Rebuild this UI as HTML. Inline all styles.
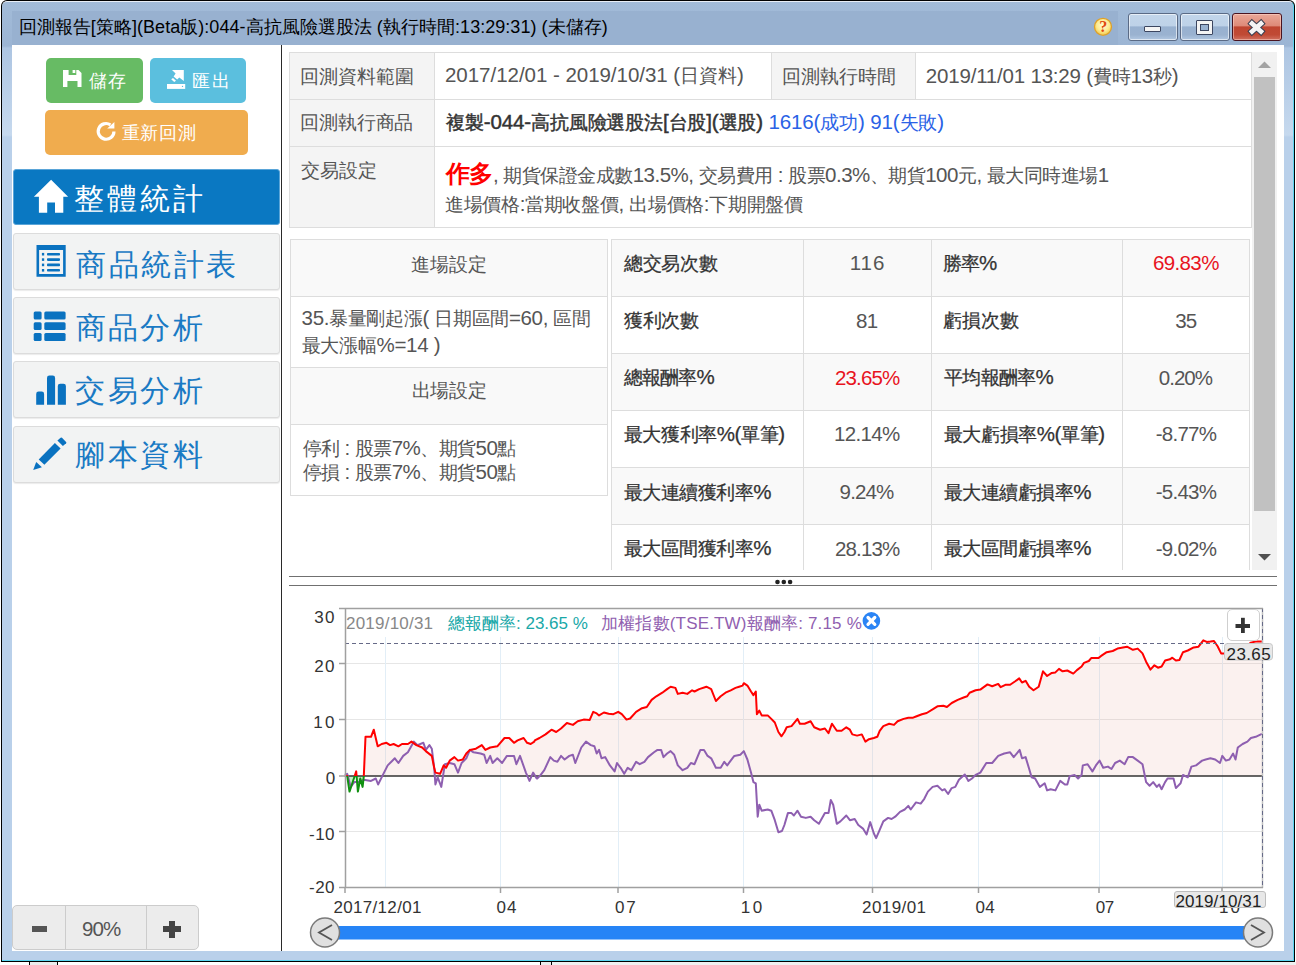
<!DOCTYPE html>
<html><head><meta charset="utf-8">
<style>
*{box-sizing:border-box;margin:0;padding:0}
html,body{width:1296px;height:965px;overflow:hidden;background:#fff;font-family:"Liberation Sans",sans-serif}
.a{position:absolute}
.t{position:absolute;white-space:nowrap;line-height:1}
</style></head><body>
<!-- window -->
<div class="a" style="left:0;top:962px;width:1296px;height:3px;background:#f0f0f0"></div>
<div class="a" style="left:0;top:962px;width:540px;height:3px;background:#fff"></div>
<div class="a" style="left:29px;top:962px;width:29px;height:3px;background:#ececec;border-left:1px solid #000;border-right:1px solid #000"></div>
<div class="a" style="left:540px;top:962px;width:12px;height:3px;background:#ececec;border-left:1px solid #000;border-right:1px solid #000"></div>
<div class="a" style="left:1px;top:0;width:1294px;height:962px;background:#000;border-radius:6px 6px 0 0"></div>
<div class="a" style="left:2px;top:1px;width:1292px;height:960px;background:linear-gradient(#a2bbd8 0px,#9cb5d4 44px,#adc5e2 46px,#c6d9ee 133px,#b9d0ea 135px,#b9d0ea 100%);border-radius:5px 5px 0 0;border-top:1px solid #e8eef6;border-right:1px solid #5ad6f0;border-bottom:1px solid #5ad6f0"></div>
<div class="a" style="left:12px;top:11px;width:1106px;height:34px;background:#98b1d0"></div>
<div class="a" style="left:12px;top:45px;width:1272px;height:906px;background:#fff"></div>


<!-- title buttons -->
<svg class="a" style="left:1093px;top:17px" width="20" height="20" viewBox="0 0 20 20"><defs><radialGradient id="hg" cx="50%" cy="40%" r="60%"><stop offset="0" stop-color="#fffbd8"/><stop offset="0.6" stop-color="#fdeb90"/><stop offset="1" stop-color="#f2c84a"/></radialGradient></defs><circle cx="10" cy="9.8" r="8.5" fill="url(#hg)" stroke="#dea02a" stroke-width="1.3"/><text x="10.3" y="15.3" text-anchor="middle" font-family="Liberation Serif" font-size="16" font-weight="bold" fill="#e0480e">?</text></svg>

<div class="a" style="left:1128px;top:13px;width:50px;height:28px;border:1px solid #5a6a85;border-radius:3px;background:linear-gradient(#c2d5ea 0,#bed2e8 45%,#98b1d0 50%,#9ab2d0 80%,#b2c8e2 100%);box-shadow:inset 0 0 0 1px rgba(255,255,255,.6)"></div>
<div class="a" style="left:1144px;top:26px;width:17px;height:6px;background:#f4f4f4;border:1px solid #3c4660;border-radius:1px"></div>
<div class="a" style="left:1180px;top:13px;width:50px;height:28px;border:1px solid #5a6a85;border-radius:3px;background:linear-gradient(#c2d5ea 0,#bed2e8 45%,#98b1d0 50%,#9ab2d0 80%,#b2c8e2 100%);box-shadow:inset 0 0 0 1px rgba(255,255,255,.6)"></div>
<div class="a" style="left:1196px;top:20px;width:17px;height:15px;background:#f4f4f4;border:1px solid #3c4660;border-radius:1px"></div>
<div class="a" style="left:1200px;top:24px;width:9px;height:7px;background:#98b1d0;border:1px solid #3c4660"></div>
<div class="a" style="left:1232px;top:13px;width:50px;height:28px;border:1px solid #4a1420;border-radius:3px;background:linear-gradient(#eaa898 0,#de8a78 45%,#bf4530 50%,#c04a35 80%,#d07060 100%);box-shadow:inset 0 0 0 1px rgba(255,220,210,.5)"></div>
<svg class="a" style="left:1246px;top:18px" width="22" height="19" viewBox="0 0 22 19"><path d="M6,5.5 L15,13.5 M15,5.5 L6,13.5" stroke="#3a3f50" stroke-width="6.6" stroke-linecap="square"/><path d="M6,5.5 L15,13.5 M15,5.5 L6,13.5" stroke="#f4f4f4" stroke-width="4.6" stroke-linecap="square"/></svg>

<!-- sidebar -->
<div class="a" style="left:281px;top:45px;width:1px;height:906px;background:#2a2a2a"></div>

<div class="a" style="left:46px;top:58px;width:97px;height:45px;background:#67bb64;border-radius:5px"></div>
<svg class="a" style="left:63.4px;top:69.9px" width="19" height="18" viewBox="0 0 19 18"><path d="M0,0 H15.5 L18.5,3 V17.1 H0 Z M5.6,0 V5 H13.3 V0 Z M4.4,11 V17.1 H14.5 V11 Z" fill="#fff" fill-rule="evenodd"/><rect x="9.6" y="0" width="2.7" height="3" fill="#fff"/></svg>

<div class="a" style="left:150px;top:58px;width:96px;height:45px;background:#5bbfde;border-radius:5px"></div>
<svg class="a" style="left:160px;top:64px" width="32" height="30" viewBox="0 0 32 30"><path d="M12,6.1 H23.8 V16.9 L19.3,13.4 L17.2,15.6 L13.6,12.4 L15.6,9.6 Z" fill="#fff"/><path d="M11.2,15.2 L13,14 L16,16.8 L14.2,18 Z" fill="#fff"/><rect x="7" y="20" width="18.2" height="4.9" fill="#fff"/><circle cx="22.5" cy="22.4" r="0.7" fill="#5bbfde"/></svg>

<div class="a" style="left:45px;top:110px;width:203px;height:45px;background:#f0ac4e;border-radius:5px"></div>
<svg class="a" style="left:92px;top:116px" width="32" height="30" viewBox="0 0 32 30"><path d="M21.95,15.4 A7.85,7.85 0 1 1 18.4,8.8" fill="none" stroke="#fff" stroke-width="3.2"/><path d="M15.2,12.6 L22.4,5.9 L22.4,12.4 Z" fill="#fff"/></svg>

<!-- nav -->
<div class="a" style="left:13px;top:169px;width:267px;height:56px;background:#0a78c2;border:1px solid #5aa5d8;border-radius:3px"></div>

<div class="a navb" style="top:233px"></div>

<div class="a navb" style="top:297px"></div>

<div class="a navb" style="top:361px"></div>

<div class="a navb" style="top:426px"></div>

<svg class="a" style="left:0;top:0" width="281" height="500">
 <path d="M51.1,179.7 L68.1,196.7 H63.3 V212.8 H55 V202.5 H47.2 V212.8 H38.9 V196.7 H33.9 Z" fill="#fff"/>
 <path d="M36.5,244.9 H65.7 V276.8 H36.5 Z M39.1,250 V274 H63.1 V250 Z" fill="#0a72c0" fill-rule="evenodd"/>
 <g fill="#0a72c0"><rect x="41.9" y="252.9" width="2.3" height="2.6"/><rect x="47" y="252.9" width="13" height="2.6" rx="0.8"/>
 <rect x="41.9" y="258.3" width="2.3" height="2.6"/><rect x="47" y="258.3" width="13" height="2.6" rx="0.8"/>
 <rect x="41.9" y="263.6" width="2.3" height="2.6"/><rect x="47" y="263.6" width="13" height="2.6" rx="0.8"/>
 <rect x="41.9" y="269" width="2.3" height="2.6"/><rect x="47" y="269" width="13" height="2.6" rx="0.8"/></g>
 <g fill="#0a72c0"><rect x="33.7" y="311.6" width="7.9" height="7.9" rx="1.5"/><rect x="44.3" y="311.6" width="21.3" height="7.9" rx="1.5"/>
 <rect x="33.7" y="322.2" width="7.9" height="7.9" rx="1.5"/><rect x="44.3" y="322.2" width="21.3" height="7.9" rx="1.5"/>
 <rect x="33.7" y="333" width="7.9" height="7.9" rx="1.5"/><rect x="44.3" y="333" width="21.3" height="7.9" rx="1.5"/></g>
 <g fill="#0a72c0"><path d="M36.2,404.8 V394 A2.4,2.4 0 0 1 38.6,391.6 H41.7 A2.4,2.4 0 0 1 44.1,394 V404.8 Z"/>
 <path d="M47,404.8 V378 A2.4,2.4 0 0 1 49.4,375.6 H52.7 A2.4,2.4 0 0 1 55.1,378 V404.8 Z"/>
 <path d="M57.8,404.8 V386.1 A2.4,2.4 0 0 1 60.2,383.7 H63.5 A2.4,2.4 0 0 1 65.9,386.1 V404.8 Z"/></g>
 <g fill="#0a72c0"><path d="M33.2,470.1 L36.2,461.9 L41.9,467.3 Z"/><path d="M38.7,459.4 L54.9,442.9 L60.6,448.4 L44.4,464.8 Z"/><path d="M57.4,440.4 L60.6,437.7 Q61.3,437.2 62,437.8 L66.1,441.9 Q66.6,442.6 66.1,443.2 L62.9,445.9 Z"/></g>
</svg>
<!-- zoom control -->
<div class="a" style="left:12px;top:905px;width:187px;height:45px;background:#ececec;border:1px solid #ccc;border-radius:5px"></div>
<div class="a" style="left:65px;top:906px;width:1px;height:43px;background:#ccc"></div>
<div class="a" style="left:146px;top:906px;width:1px;height:43px;background:#ccc"></div>
<div class="a" style="left:32px;top:926px;width:15px;height:6px;background:#555"></div>
<div class="a" style="left:163px;top:926px;width:18px;height:6px;background:#444"></div>
<div class="a" style="left:169px;top:921px;width:6px;height:17px;background:#444"></div>

<style>
.nav{font-size:30px;color:#1a7ac4;letter-spacing:2px}
.navb{left:13px;width:267px;height:57px;background:#f2f3f3;border:1px solid #dcdcdc;border-radius:3px;box-shadow:0 1px 1px rgba(0,0,0,.08)}
.cell{position:absolute;border:1px solid #ddd}
.g{background:#f4f4f4}
.s{background:#f9f9f9}
.tx{position:absolute;white-space:nowrap;line-height:1;font-size:18px;color:#555}
.b{font-weight:bold;color:#333}
</style>

<!-- info table -->
<div class="cell" style="left:289px;top:52px;width:963px;height:176px;background:#fff"></div>
<div class="a g" style="left:290px;top:53px;width:144px;height:174px"></div>
<div class="a g" style="left:772px;top:53px;width:143px;height:46px"></div>
<div class="a" style="left:290px;top:99px;width:961px;height:1px;background:#ddd"></div>
<div class="a" style="left:290px;top:146px;width:961px;height:1px;background:#ddd"></div>
<div class="a" style="left:434px;top:53px;width:1px;height:174px;background:#ddd"></div>
<div class="a" style="left:771px;top:53px;width:1px;height:46px;background:#ddd"></div>
<div class="a" style="left:915px;top:53px;width:1px;height:46px;background:#ddd"></div>


<!-- entry/exit table -->
<div class="cell" style="left:290px;top:239px;width:318px;height:257px;background:#fff"></div>
<div class="a s" style="left:291px;top:240px;width:316px;height:56px"></div>
<div class="a s" style="left:291px;top:368px;width:316px;height:56px"></div>
<div class="a" style="left:291px;top:296px;width:316px;height:1px;background:#ddd"></div>
<div class="a" style="left:291px;top:367px;width:316px;height:1px;background:#ddd"></div>
<div class="a" style="left:291px;top:424px;width:316px;height:1px;background:#ddd"></div>

<!-- stats table -->
<div class="a" style="left:611px;top:239px;width:639px;height:331px;overflow:hidden">
 <div class="a" style="left:0;top:0;width:639px;height:400px;border:1px solid #ddd;background:#fff"></div>
 <div class="a s" style="left:1px;top:1px;width:637px;height:57px"></div>
 <div class="a s" style="left:1px;top:115px;width:637px;height:57px"></div>
 <div class="a s" style="left:1px;top:229px;width:637px;height:57px"></div>
 <div class="a" style="left:0;top:57px;width:639px;height:1px;background:#ddd"></div>
 <div class="a" style="left:0;top:114px;width:639px;height:1px;background:#ddd"></div>
 <div class="a" style="left:0;top:171px;width:639px;height:1px;background:#ddd"></div>
 <div class="a" style="left:0;top:228px;width:639px;height:1px;background:#ddd"></div>
 <div class="a" style="left:0;top:285px;width:639px;height:1px;background:#ddd"></div>
 <div class="a" style="left:192px;top:0;width:1px;height:400px;background:#ddd"></div>
 <div class="a" style="left:320px;top:0;width:1px;height:400px;background:#ddd"></div>
 <div class="a" style="left:511px;top:0;width:1px;height:400px;background:#ddd"></div>
</div>

<!-- scrollbar -->
<div class="a" style="left:1252px;top:52px;width:25px;height:518px;background:#f1f1f1"></div>
<div class="a" style="left:1254px;top:77px;width:21px;height:434px;background:#c1c1c1"></div>
<svg class="a" style="left:1258px;top:61px" width="13" height="8"><path d="M0,7 L6.5,0.5 L13,7 Z" fill="#a3a3a3"/></svg>
<svg class="a" style="left:1258px;top:553px" width="13" height="8"><path d="M0,1 L6.5,7.5 L13,1 Z" fill="#505050"/></svg>

<!-- splitter -->
<div class="a" style="left:289px;top:576px;width:988px;height:1px;background:#707070"></div>
<div class="a" style="left:289px;top:585px;width:988px;height:1px;background:#707070"></div>

<svg class="a" style="left:775px;top:578.5px" width="18" height="6"><circle cx="2.5" cy="3" r="2.3" fill="#222"/><circle cx="8.8" cy="3" r="2.3" fill="#222"/><circle cx="15.1" cy="3" r="2.3" fill="#222"/></svg>
<!-- chart texts -->
<style>.ch{font-size:17px;color:#333}</style>



<svg width="1296" height="965" style="position:absolute;left:0;top:0">
 <defs>
  <clipPath id="cpos"><rect x="340" y="600" width="930" height="176.0"/></clipPath>
  <clipPath id="cneg"><rect x="340" y="776.0" width="930" height="114.0"/></clipPath>
 </defs>
 <!-- horizontal grid -->
 <g stroke="#e6e6e6" stroke-width="1">
  <line x1="345" y1="663.5" x2="1262" y2="663.5"/>
  <line x1="345" y1="719.5" x2="1262" y2="719.5"/>
  <line x1="345" y1="831.5" x2="1262" y2="831.5"/>
 </g>
 <!-- vertical grid -->
 <g stroke="#e2eef7" stroke-width="1">
  <line x1="385.5" y1="637" x2="385.5" y2="887"/>
  <line x1="500.5" y1="637" x2="500.5" y2="887"/>
  <line x1="618.5" y1="637" x2="618.5" y2="887"/>
  <line x1="743.5" y1="637" x2="743.5" y2="887"/>
  <line x1="872.5" y1="637" x2="872.5" y2="887"/>
  <line x1="978.5" y1="637" x2="978.5" y2="887"/>
  <line x1="1099.5" y1="637" x2="1099.5" y2="887"/>
  <line x1="1222.5" y1="637" x2="1222.5" y2="887"/>
 </g>
 <path d="M344.8,775.7 L347.2,776.1 L349.5,791.6 L351.9,784.5 L354.3,777.3 L356.2,771.4 L357.9,791.6 L360.3,778.5 L362.6,786.9 L363.8,776.1 L365.5,736.8 L371.0,736.8 L373.8,729.7 L377.7,746.3 L381.7,744.0 L386.5,742.8 L390.1,745.1 L393.6,744.0 L398.4,746.3 L402.0,744.0 L407.9,744.0 L411.5,741.6 L416.3,745.1 L422.2,747.5 L425.8,751.1 L431.8,755.9 L434.2,767.8 L435.4,772.6 L440.1,773.8 L443.7,765.4 L446.1,767.8 L449.7,760.6 L454.4,757.1 L458.0,760.6 L462.8,759.5 L466.3,753.5 L469.9,749.9 L475.9,748.7 L481.8,745.1 L485.4,749.9 L490.2,747.5 L497.3,746.3 L504.5,738.0 L509.2,738.0 L514.0,742.8 L517.6,740.4 L523.6,738.0 L527.1,742.8 L530.7,744.0 L534.3,741.6 L534.8,740.4 L539.5,738.0 L545.5,734.4 L551.5,729.7 L556.2,732.0 L561.0,728.5 L566.9,723.0 L572.9,724.9 L577.7,721.3 L583.6,719.6 L589.6,720.1 L593.2,711.8 L596.7,713.4 L599.1,715.4 L603.9,712.5 L608.7,713.7 L613.4,714.2 L618.2,711.8 L621.8,714.2 L626.5,719.6 L630.1,718.5 L636.1,711.8 L642.0,708.2 L646.8,707.0 L651.6,699.9 L656.3,696.3 L662.3,692.7 L667.1,689.1 L670.6,686.7 L675.4,687.9 L677.8,693.9 L682.6,692.7 L687.3,693.9 L692.1,690.3 L694.5,691.5 L699.2,689.1 L706.4,686.7 L711.2,689.1 L715.9,701.0 L720.7,696.3 L725.5,692.7 L730.7,690.3 L735.5,687.9 L739.1,686.7 L742.6,685.6 L743.8,683.2 L747.4,685.6 L751.0,691.5 L753.4,695.1 L755.8,691.5 L756.9,714.2 L759.3,710.6 L761.7,715.4 L767.7,715.4 L771.3,718.9 L774.8,722.5 L778.4,732.0 L781.5,736.3 L784.4,732.0 L786.7,727.3 L791.5,726.1 L797.5,718.9 L799.9,723.7 L804.6,723.7 L810.6,721.3 L814.2,727.3 L820.1,729.7 L824.9,728.5 L828.5,733.2 L832.0,723.7 L836.8,730.8 L841.6,730.8 L846.3,727.3 L849.9,729.7 L852.3,734.4 L857.1,735.6 L861.8,734.4 L865.4,741.6 L869.0,739.2 L873.8,738.0 L877.3,736.8 L879.7,730.8 L883.3,726.1 L889.2,723.7 L894.0,724.9 L897.6,721.3 L903.6,718.9 L908.3,717.7 L913.1,717.7 L916.0,716.5 L921.9,714.2 L926.7,713.0 L932.6,709.4 L937.4,706.3 L943.4,705.8 L946.9,707.0 L951.7,703.0 L957.7,699.9 L963.6,697.5 L967.2,696.3 L969.6,692.7 L975.6,690.3 L980.3,689.6 L987.5,684.4 L992.2,686.3 L998.2,683.9 L1000.6,687.2 L1005.4,684.8 L1010.1,684.8 L1014.9,681.5 L1019.2,678.4 L1022.0,682.5 L1025.6,680.8 L1029.2,686.7 L1033.5,690.3 L1038.7,686.7 L1043.0,671.3 L1047.1,676.0 L1051.8,672.9 L1055.4,672.4 L1059.0,668.9 L1062.6,671.3 L1067.3,670.5 L1073.3,673.6 L1076.9,670.1 L1081.6,666.5 L1084.0,662.9 L1088.8,661.0 L1091.2,658.1 L1098.3,658.1 L1100.8,656.2 L1106.7,652.2 L1112.7,651.0 L1117.5,648.6 L1127.0,646.7 L1132.9,649.8 L1137.7,648.6 L1142.5,653.4 L1146.1,661.7 L1150.4,669.6 L1154.4,665.3 L1158.0,667.7 L1161.6,666.5 L1165.1,660.5 L1169.9,659.3 L1172.3,657.7 L1175.9,660.5 L1179.4,660.0 L1183.0,652.2 L1187.8,650.5 L1193.7,647.4 L1198.5,646.7 L1203.3,640.3 L1206.8,641.9 L1210.4,641.5 L1214.0,641.0 L1217.6,646.2 L1221.1,653.4 L1224.7,653.4 L1229.5,652.2 L1236.6,651.0 L1243.8,648.6 L1250.9,642.6 L1255.7,641.5 L1261.9,641.5 L1262,776.0 L344.8,776.0 Z" fill="rgba(235,180,170,0.19)" clip-path="url(#cpos)"/>
 <path d="M344.8,775.7 L347.2,776.1 L349.5,791.6 L351.9,784.5 L354.3,777.3 L356.2,771.4 L357.9,791.6 L360.3,778.5 L362.6,786.9 L363.8,776.1 L365.5,736.8 L371.0,736.8 L373.8,729.7 L377.7,746.3 L381.7,744.0 L386.5,742.8 L390.1,745.1 L393.6,744.0 L398.4,746.3 L402.0,744.0 L407.9,744.0 L411.5,741.6 L416.3,745.1 L422.2,747.5 L425.8,751.1 L431.8,755.9 L434.2,767.8 L435.4,772.6 L440.1,773.8 L443.7,765.4 L446.1,767.8 L449.7,760.6 L454.4,757.1 L458.0,760.6 L462.8,759.5 L466.3,753.5 L469.9,749.9 L475.9,748.7 L481.8,745.1 L485.4,749.9 L490.2,747.5 L497.3,746.3 L504.5,738.0 L509.2,738.0 L514.0,742.8 L517.6,740.4 L523.6,738.0 L527.1,742.8 L530.7,744.0 L534.3,741.6 L534.8,740.4 L539.5,738.0 L545.5,734.4 L551.5,729.7 L556.2,732.0 L561.0,728.5 L566.9,723.0 L572.9,724.9 L577.7,721.3 L583.6,719.6 L589.6,720.1 L593.2,711.8 L596.7,713.4 L599.1,715.4 L603.9,712.5 L608.7,713.7 L613.4,714.2 L618.2,711.8 L621.8,714.2 L626.5,719.6 L630.1,718.5 L636.1,711.8 L642.0,708.2 L646.8,707.0 L651.6,699.9 L656.3,696.3 L662.3,692.7 L667.1,689.1 L670.6,686.7 L675.4,687.9 L677.8,693.9 L682.6,692.7 L687.3,693.9 L692.1,690.3 L694.5,691.5 L699.2,689.1 L706.4,686.7 L711.2,689.1 L715.9,701.0 L720.7,696.3 L725.5,692.7 L730.7,690.3 L735.5,687.9 L739.1,686.7 L742.6,685.6 L743.8,683.2 L747.4,685.6 L751.0,691.5 L753.4,695.1 L755.8,691.5 L756.9,714.2 L759.3,710.6 L761.7,715.4 L767.7,715.4 L771.3,718.9 L774.8,722.5 L778.4,732.0 L781.5,736.3 L784.4,732.0 L786.7,727.3 L791.5,726.1 L797.5,718.9 L799.9,723.7 L804.6,723.7 L810.6,721.3 L814.2,727.3 L820.1,729.7 L824.9,728.5 L828.5,733.2 L832.0,723.7 L836.8,730.8 L841.6,730.8 L846.3,727.3 L849.9,729.7 L852.3,734.4 L857.1,735.6 L861.8,734.4 L865.4,741.6 L869.0,739.2 L873.8,738.0 L877.3,736.8 L879.7,730.8 L883.3,726.1 L889.2,723.7 L894.0,724.9 L897.6,721.3 L903.6,718.9 L908.3,717.7 L913.1,717.7 L916.0,716.5 L921.9,714.2 L926.7,713.0 L932.6,709.4 L937.4,706.3 L943.4,705.8 L946.9,707.0 L951.7,703.0 L957.7,699.9 L963.6,697.5 L967.2,696.3 L969.6,692.7 L975.6,690.3 L980.3,689.6 L987.5,684.4 L992.2,686.3 L998.2,683.9 L1000.6,687.2 L1005.4,684.8 L1010.1,684.8 L1014.9,681.5 L1019.2,678.4 L1022.0,682.5 L1025.6,680.8 L1029.2,686.7 L1033.5,690.3 L1038.7,686.7 L1043.0,671.3 L1047.1,676.0 L1051.8,672.9 L1055.4,672.4 L1059.0,668.9 L1062.6,671.3 L1067.3,670.5 L1073.3,673.6 L1076.9,670.1 L1081.6,666.5 L1084.0,662.9 L1088.8,661.0 L1091.2,658.1 L1098.3,658.1 L1100.8,656.2 L1106.7,652.2 L1112.7,651.0 L1117.5,648.6 L1127.0,646.7 L1132.9,649.8 L1137.7,648.6 L1142.5,653.4 L1146.1,661.7 L1150.4,669.6 L1154.4,665.3 L1158.0,667.7 L1161.6,666.5 L1165.1,660.5 L1169.9,659.3 L1172.3,657.7 L1175.9,660.5 L1179.4,660.0 L1183.0,652.2 L1187.8,650.5 L1193.7,647.4 L1198.5,646.7 L1203.3,640.3 L1206.8,641.9 L1210.4,641.5 L1214.0,641.0 L1217.6,646.2 L1221.1,653.4 L1224.7,653.4 L1229.5,652.2 L1236.6,651.0 L1243.8,648.6 L1250.9,642.6 L1255.7,641.5 L1261.9,641.5 L1262,776.0 L344.8,776.0 Z" fill="rgba(60,200,60,0.3)" clip-path="url(#cneg)"/>
 <line x1="345" y1="776.0" x2="1262" y2="776.0" stroke="#333" stroke-width="1.5"/>
 <path d="M344.8,774.9 L347.2,773.8 L350.7,786.9 L354.3,782.1 L359.1,782.1 L363.8,779.7 L371.0,780.9 L375.8,778.5 L378.1,784.5 L382.9,774.9 L387.7,765.4 L394.8,758.3 L398.4,763.0 L403.2,755.9 L407.9,752.3 L413.9,741.6 L417.5,745.1 L423.4,742.8 L425.8,749.9 L429.4,745.1 L431.8,748.7 L434.2,767.8 L435.4,784.5 L437.7,777.3 L441.3,786.9 L444.9,764.2 L449.7,763.0 L454.4,764.2 L458.0,772.6 L461.6,763.0 L466.3,758.3 L469.9,749.9 L473.5,752.3 L480.6,753.5 L484.2,754.7 L486.6,763.0 L490.2,755.9 L492.6,763.0 L497.3,758.3 L502.1,763.0 L506.9,755.9 L514.0,755.9 L516.4,764.2 L520.0,755.9 L525.9,772.6 L529.5,780.9 L533.1,772.6 L536.7,778.5 L537.2,778.5 L540.7,774.9 L544.3,770.2 L550.3,757.1 L553.8,760.6 L557.4,761.8 L561.0,755.9 L564.6,759.5 L569.3,755.9 L572.9,754.7 L575.3,763.0 L581.3,747.5 L586.0,741.6 L590.8,745.1 L594.4,746.3 L596.7,753.5 L599.1,749.9 L601.5,758.3 L605.1,757.1 L609.9,765.4 L614.6,771.4 L617.0,763.0 L620.6,767.8 L624.2,773.8 L627.7,767.8 L631.3,770.2 L636.1,761.8 L639.7,764.2 L644.4,761.8 L648.0,757.1 L654.0,752.3 L657.5,749.9 L661.1,749.9 L663.5,757.1 L667.1,753.5 L670.6,751.1 L674.2,754.7 L677.8,765.4 L682.6,770.2 L687.3,767.8 L690.9,763.0 L694.5,764.2 L700.4,749.9 L704.0,749.9 L707.6,755.9 L711.2,758.3 L715.9,767.8 L720.7,767.8 L724.3,761.8 L727.2,765.4 L730.7,760.6 L734.3,755.9 L740.3,754.7 L743.8,751.1 L747.4,759.5 L751.0,772.6 L753.4,782.1 L755.8,783.3 L757.7,816.7 L759.3,804.7 L761.7,810.7 L767.7,809.5 L771.3,810.7 L774.8,820.2 L778.4,832.2 L782.0,831.0 L784.4,825.0 L787.9,813.1 L791.5,813.1 L793.9,815.5 L797.5,810.7 L801.0,816.7 L805.8,817.9 L810.6,816.7 L814.2,820.2 L818.9,823.8 L824.9,813.1 L828.5,813.1 L830.8,800.0 L833.2,804.7 L836.8,823.8 L840.4,821.4 L846.3,815.5 L849.9,820.2 L854.7,819.0 L858.3,825.0 L863.0,828.6 L866.6,834.5 L870.2,822.1 L873.8,833.3 L876.1,838.1 L879.7,829.8 L883.3,821.4 L888.1,817.9 L891.6,819.0 L895.2,816.7 L900.0,811.9 L904.7,809.5 L908.3,805.9 L910.7,809.5 L916.0,802.4 L920.7,803.6 L924.3,798.8 L927.9,791.6 L932.6,786.9 L937.4,785.7 L942.2,790.4 L944.6,789.2 L948.1,794.0 L951.7,788.1 L955.3,786.9 L958.9,779.7 L964.8,774.5 L968.4,780.9 L972.0,778.5 L975.6,774.9 L980.3,772.6 L986.3,763.0 L992.2,763.0 L998.2,755.9 L1004.2,753.5 L1010.1,752.3 L1013.7,757.1 L1019.7,749.9 L1022.0,758.3 L1025.6,757.1 L1029.2,769.0 L1031.6,777.3 L1035.1,778.5 L1039.9,786.9 L1044.7,783.3 L1047.1,790.4 L1050.6,789.2 L1055.4,790.4 L1060.2,780.9 L1064.9,784.5 L1067.3,784.5 L1069.7,776.1 L1074.5,774.9 L1078.1,778.5 L1081.6,774.9 L1082.8,765.4 L1087.6,764.2 L1092.4,771.4 L1095.9,765.4 L1099.6,760.6 L1103.2,767.8 L1107.9,766.6 L1111.5,769.0 L1115.1,763.0 L1119.8,760.6 L1124.6,764.2 L1128.2,757.1 L1132.9,757.1 L1137.7,760.6 L1142.5,764.2 L1146.1,782.1 L1149.6,785.7 L1153.2,782.1 L1156.8,786.9 L1159.2,784.5 L1161.6,789.2 L1165.1,782.1 L1167.5,778.5 L1173.5,778.5 L1175.9,788.1 L1180.6,783.3 L1183.0,774.9 L1187.8,777.3 L1191.4,766.6 L1196.1,765.4 L1202.1,760.6 L1205.7,759.5 L1210.4,758.3 L1215.2,759.5 L1220.0,763.0 L1222.3,755.9 L1225.9,760.6 L1229.5,759.5 L1233.1,753.5 L1235.5,759.5 L1237.8,747.5 L1242.6,744.0 L1247.4,741.6 L1250.9,738.0 L1255.7,736.8 L1261.9,733.9" fill="none" stroke="#8e5fb0" stroke-width="2" stroke-linejoin="round"/>
 <path d="M344.8,775.7 L347.2,776.1 L349.5,791.6 L351.9,784.5 L354.3,777.3 L356.2,771.4 L357.9,791.6 L360.3,778.5 L362.6,786.9 L363.8,776.1 L365.5,736.8 L371.0,736.8 L373.8,729.7 L377.7,746.3 L381.7,744.0 L386.5,742.8 L390.1,745.1 L393.6,744.0 L398.4,746.3 L402.0,744.0 L407.9,744.0 L411.5,741.6 L416.3,745.1 L422.2,747.5 L425.8,751.1 L431.8,755.9 L434.2,767.8 L435.4,772.6 L440.1,773.8 L443.7,765.4 L446.1,767.8 L449.7,760.6 L454.4,757.1 L458.0,760.6 L462.8,759.5 L466.3,753.5 L469.9,749.9 L475.9,748.7 L481.8,745.1 L485.4,749.9 L490.2,747.5 L497.3,746.3 L504.5,738.0 L509.2,738.0 L514.0,742.8 L517.6,740.4 L523.6,738.0 L527.1,742.8 L530.7,744.0 L534.3,741.6 L534.8,740.4 L539.5,738.0 L545.5,734.4 L551.5,729.7 L556.2,732.0 L561.0,728.5 L566.9,723.0 L572.9,724.9 L577.7,721.3 L583.6,719.6 L589.6,720.1 L593.2,711.8 L596.7,713.4 L599.1,715.4 L603.9,712.5 L608.7,713.7 L613.4,714.2 L618.2,711.8 L621.8,714.2 L626.5,719.6 L630.1,718.5 L636.1,711.8 L642.0,708.2 L646.8,707.0 L651.6,699.9 L656.3,696.3 L662.3,692.7 L667.1,689.1 L670.6,686.7 L675.4,687.9 L677.8,693.9 L682.6,692.7 L687.3,693.9 L692.1,690.3 L694.5,691.5 L699.2,689.1 L706.4,686.7 L711.2,689.1 L715.9,701.0 L720.7,696.3 L725.5,692.7 L730.7,690.3 L735.5,687.9 L739.1,686.7 L742.6,685.6 L743.8,683.2 L747.4,685.6 L751.0,691.5 L753.4,695.1 L755.8,691.5 L756.9,714.2 L759.3,710.6 L761.7,715.4 L767.7,715.4 L771.3,718.9 L774.8,722.5 L778.4,732.0 L781.5,736.3 L784.4,732.0 L786.7,727.3 L791.5,726.1 L797.5,718.9 L799.9,723.7 L804.6,723.7 L810.6,721.3 L814.2,727.3 L820.1,729.7 L824.9,728.5 L828.5,733.2 L832.0,723.7 L836.8,730.8 L841.6,730.8 L846.3,727.3 L849.9,729.7 L852.3,734.4 L857.1,735.6 L861.8,734.4 L865.4,741.6 L869.0,739.2 L873.8,738.0 L877.3,736.8 L879.7,730.8 L883.3,726.1 L889.2,723.7 L894.0,724.9 L897.6,721.3 L903.6,718.9 L908.3,717.7 L913.1,717.7 L916.0,716.5 L921.9,714.2 L926.7,713.0 L932.6,709.4 L937.4,706.3 L943.4,705.8 L946.9,707.0 L951.7,703.0 L957.7,699.9 L963.6,697.5 L967.2,696.3 L969.6,692.7 L975.6,690.3 L980.3,689.6 L987.5,684.4 L992.2,686.3 L998.2,683.9 L1000.6,687.2 L1005.4,684.8 L1010.1,684.8 L1014.9,681.5 L1019.2,678.4 L1022.0,682.5 L1025.6,680.8 L1029.2,686.7 L1033.5,690.3 L1038.7,686.7 L1043.0,671.3 L1047.1,676.0 L1051.8,672.9 L1055.4,672.4 L1059.0,668.9 L1062.6,671.3 L1067.3,670.5 L1073.3,673.6 L1076.9,670.1 L1081.6,666.5 L1084.0,662.9 L1088.8,661.0 L1091.2,658.1 L1098.3,658.1 L1100.8,656.2 L1106.7,652.2 L1112.7,651.0 L1117.5,648.6 L1127.0,646.7 L1132.9,649.8 L1137.7,648.6 L1142.5,653.4 L1146.1,661.7 L1150.4,669.6 L1154.4,665.3 L1158.0,667.7 L1161.6,666.5 L1165.1,660.5 L1169.9,659.3 L1172.3,657.7 L1175.9,660.5 L1179.4,660.0 L1183.0,652.2 L1187.8,650.5 L1193.7,647.4 L1198.5,646.7 L1203.3,640.3 L1206.8,641.9 L1210.4,641.5 L1214.0,641.0 L1217.6,646.2 L1221.1,653.4 L1224.7,653.4 L1229.5,652.2 L1236.6,651.0 L1243.8,648.6 L1250.9,642.6 L1255.7,641.5 L1261.9,641.5" fill="none" stroke="#ff0000" stroke-width="2" stroke-linejoin="round" clip-path="url(#cpos)"/>
 <path d="M344.8,775.7 L347.2,776.1 L349.5,791.6 L351.9,784.5 L354.3,777.3 L356.2,771.4 L357.9,791.6 L360.3,778.5 L362.6,786.9 L363.8,776.1 L365.5,736.8 L371.0,736.8 L373.8,729.7 L377.7,746.3 L381.7,744.0 L386.5,742.8 L390.1,745.1 L393.6,744.0 L398.4,746.3 L402.0,744.0 L407.9,744.0 L411.5,741.6 L416.3,745.1 L422.2,747.5 L425.8,751.1 L431.8,755.9 L434.2,767.8 L435.4,772.6 L440.1,773.8 L443.7,765.4 L446.1,767.8 L449.7,760.6 L454.4,757.1 L458.0,760.6 L462.8,759.5 L466.3,753.5 L469.9,749.9 L475.9,748.7 L481.8,745.1 L485.4,749.9 L490.2,747.5 L497.3,746.3 L504.5,738.0 L509.2,738.0 L514.0,742.8 L517.6,740.4 L523.6,738.0 L527.1,742.8 L530.7,744.0 L534.3,741.6 L534.8,740.4 L539.5,738.0 L545.5,734.4 L551.5,729.7 L556.2,732.0 L561.0,728.5 L566.9,723.0 L572.9,724.9 L577.7,721.3 L583.6,719.6 L589.6,720.1 L593.2,711.8 L596.7,713.4 L599.1,715.4 L603.9,712.5 L608.7,713.7 L613.4,714.2 L618.2,711.8 L621.8,714.2 L626.5,719.6 L630.1,718.5 L636.1,711.8 L642.0,708.2 L646.8,707.0 L651.6,699.9 L656.3,696.3 L662.3,692.7 L667.1,689.1 L670.6,686.7 L675.4,687.9 L677.8,693.9 L682.6,692.7 L687.3,693.9 L692.1,690.3 L694.5,691.5 L699.2,689.1 L706.4,686.7 L711.2,689.1 L715.9,701.0 L720.7,696.3 L725.5,692.7 L730.7,690.3 L735.5,687.9 L739.1,686.7 L742.6,685.6 L743.8,683.2 L747.4,685.6 L751.0,691.5 L753.4,695.1 L755.8,691.5 L756.9,714.2 L759.3,710.6 L761.7,715.4 L767.7,715.4 L771.3,718.9 L774.8,722.5 L778.4,732.0 L781.5,736.3 L784.4,732.0 L786.7,727.3 L791.5,726.1 L797.5,718.9 L799.9,723.7 L804.6,723.7 L810.6,721.3 L814.2,727.3 L820.1,729.7 L824.9,728.5 L828.5,733.2 L832.0,723.7 L836.8,730.8 L841.6,730.8 L846.3,727.3 L849.9,729.7 L852.3,734.4 L857.1,735.6 L861.8,734.4 L865.4,741.6 L869.0,739.2 L873.8,738.0 L877.3,736.8 L879.7,730.8 L883.3,726.1 L889.2,723.7 L894.0,724.9 L897.6,721.3 L903.6,718.9 L908.3,717.7 L913.1,717.7 L916.0,716.5 L921.9,714.2 L926.7,713.0 L932.6,709.4 L937.4,706.3 L943.4,705.8 L946.9,707.0 L951.7,703.0 L957.7,699.9 L963.6,697.5 L967.2,696.3 L969.6,692.7 L975.6,690.3 L980.3,689.6 L987.5,684.4 L992.2,686.3 L998.2,683.9 L1000.6,687.2 L1005.4,684.8 L1010.1,684.8 L1014.9,681.5 L1019.2,678.4 L1022.0,682.5 L1025.6,680.8 L1029.2,686.7 L1033.5,690.3 L1038.7,686.7 L1043.0,671.3 L1047.1,676.0 L1051.8,672.9 L1055.4,672.4 L1059.0,668.9 L1062.6,671.3 L1067.3,670.5 L1073.3,673.6 L1076.9,670.1 L1081.6,666.5 L1084.0,662.9 L1088.8,661.0 L1091.2,658.1 L1098.3,658.1 L1100.8,656.2 L1106.7,652.2 L1112.7,651.0 L1117.5,648.6 L1127.0,646.7 L1132.9,649.8 L1137.7,648.6 L1142.5,653.4 L1146.1,661.7 L1150.4,669.6 L1154.4,665.3 L1158.0,667.7 L1161.6,666.5 L1165.1,660.5 L1169.9,659.3 L1172.3,657.7 L1175.9,660.5 L1179.4,660.0 L1183.0,652.2 L1187.8,650.5 L1193.7,647.4 L1198.5,646.7 L1203.3,640.3 L1206.8,641.9 L1210.4,641.5 L1214.0,641.0 L1217.6,646.2 L1221.1,653.4 L1224.7,653.4 L1229.5,652.2 L1236.6,651.0 L1243.8,648.6 L1250.9,642.6 L1255.7,641.5 L1261.9,641.5" fill="none" stroke="#109010" stroke-width="2" stroke-linejoin="round" clip-path="url(#cneg)"/>
 <line x1="1262.5" y1="608" x2="1262.5" y2="888" stroke="#c0c0c0" stroke-width="1.5"/>
 <!-- dashed crosshair -->
 <line x1="345" y1="643.5" x2="1262" y2="643.5" stroke="#666a88" stroke-width="1" stroke-dasharray="4,3"/>
 <line x1="1262.5" y1="608" x2="1262.5" y2="887" stroke="#666a88" stroke-width="1" stroke-dasharray="4,3"/>
 <!-- axes -->
 <line x1="345" y1="608.5" x2="1263" y2="608.5" stroke="#a0a0a0" stroke-width="1.5"/>
 <line x1="345.5" y1="608" x2="345.5" y2="888" stroke="#a0a0a0" stroke-width="1.5"/>
 <line x1="345" y1="887.5" x2="1263" y2="887.5" stroke="#a0a0a0" stroke-width="1.5"/>
 <g stroke="#a0a0a0" stroke-width="1.5">
  <line x1="339" y1="608.5" x2="345" y2="608.5"/>
  <line x1="339" y1="663.5" x2="345" y2="663.5"/>
  <line x1="339" y1="719.5" x2="345" y2="719.5"/>
  <line x1="339" y1="776" x2="345" y2="776"/>
  <line x1="339" y1="831.5" x2="345" y2="831.5"/>
  <line x1="339" y1="887.5" x2="345" y2="887.5"/>
  <line x1="345" y1="887" x2="345" y2="893"/>
  <line x1="500.5" y1="887" x2="500.5" y2="893"/>
  <line x1="618" y1="887" x2="618" y2="893"/>
  <line x1="743.5" y1="887" x2="743.5" y2="893"/>
  <line x1="872.5" y1="887" x2="872.5" y2="893"/>
  <line x1="978.5" y1="887" x2="978.5" y2="893"/>
  <line x1="1099" y1="887" x2="1099" y2="893"/>
  <line x1="1222" y1="887" x2="1222" y2="893"/>
 </g>
 <!-- legend icon -->
 <circle cx="871.4" cy="620.9" r="8.8" fill="#2a84f5"/>
 <path d="M868,617.5 L874.8,624.3 M874.8,617.5 L868,624.3" stroke="#fff" stroke-width="3.2" stroke-linecap="round"/>
 <!-- plus button -->
 <rect x="1227.5" y="609.5" width="32" height="31" rx="4.5" fill="#fff" stroke="#cfcfcf" stroke-width="1"/>
 <rect x="1235.5" y="624" width="14.5" height="4" fill="#333"/>
 <rect x="1241" y="617.8" width="3.8" height="15.2" fill="#333"/>
 <!-- value box -->
 <rect x="1224.5" y="643.5" width="48" height="16.5" rx="3" fill="#e8e8e8" stroke="#c8c8c8" stroke-width="1"/>
 <!-- navigator -->
 <rect x="325" y="926" width="933" height="13.5" fill="#2684f6"/>
 <circle cx="325" cy="932.5" r="14.5" fill="#e0e0e0" stroke="#7a7a7a" stroke-width="1.5"/>
 <path d="M332,925 L319,932.5 L332,940" fill="none" stroke="#555" stroke-width="1.8"/>
 <circle cx="1258" cy="932.5" r="14.5" fill="#e0e0e0" stroke="#7a7a7a" stroke-width="1.5"/>
 <path d="M1251,925 L1264,932.5 L1251,940" fill="none" stroke="#555" stroke-width="1.8"/>
</svg>

<div class="t" style="left:18.7px;top:17.9px;font-size:18px;color:#000;letter-spacing:0.04px;">回測報告[策略](Beta版):044-高抗風險選股法 (執行時間:13:29:31) (未儲存)</div>
<div class="t" style="left:89.4px;top:71.6px;font-size:18px;color:#fff;letter-spacing:0.20px;">儲存</div>
<div class="t" style="left:191.6px;top:71.6px;font-size:18px;color:#fff;letter-spacing:2.80px;">匯出</div>
<div class="t" style="left:121.5px;top:123.5px;font-size:18px;color:#fff;letter-spacing:0.93px;">重新回測</div>
<div class="t" style="left:74.4px;top:184.2px;font-size:30px;color:#fff;letter-spacing:2.93px;">整體統計</div>
<div class="t" style="left:76.0px;top:249.8px;font-size:30px;color:#1a7ac4;letter-spacing:2.50px;">商品統計表</div>
<div class="t" style="left:76.0px;top:313.1px;font-size:30px;color:#1a7ac4;letter-spacing:2.20px;">商品分析</div>
<div class="t" style="left:75.0px;top:376.0px;font-size:30px;color:#1a7ac4;letter-spacing:2.53px;">交易分析</div>
<div class="t" style="left:75.0px;top:440.4px;font-size:30px;color:#1a7ac4;letter-spacing:2.53px;">腳本資料</div>
<div class="t" style="left:82.0px;top:918.5px;font-size:19px;color:#555;letter-spacing:-0.90px;"><span style="font-size:1.08em">90%</span></div>
<div class="t" style="left:299.9px;top:66.7px;font-size:19px;color:#555;letter-spacing:0.12px;">回測資料範圍</div>
<div class="t" style="left:445.0px;top:64.7px;font-size:19px;color:#555;letter-spacing:-0.04px;"><span style="font-size:1.08em">2017/12/01 - 2019/10/31 (</span>日資料<span style="font-size:1.08em">)</span></div>
<div class="t" style="left:781.8px;top:66.7px;font-size:19px;color:#555;letter-spacing:0.12px;">回測執行時間</div>
<div class="t" style="left:925.8px;top:65.7px;font-size:19px;color:#555;letter-spacing:-0.20px;"><span style="font-size:1.08em">2019/11/01 13:29 (</span>費時<span style="font-size:1.08em">13</span>秒<span style="font-size:1.08em">)</span></div>
<div class="t" style="left:299.9px;top:113.1px;font-size:19px;color:#555;letter-spacing:-0.08px;">回測執行商品</div>
<div class="t" style="left:446.0px;top:111.6px;font-size:19px;color:#555;letter-spacing:-0.14px;"><span style="color:#333;-webkit-text-stroke:0.45px #333">複製<span style="font-size:1.08em">-044-</span>高抗風險選股法<span style="font-size:1.08em">[</span>台股<span style="font-size:1.08em">](</span>選股<span style="font-size:1.08em">)</span></span><span style="font-size:1.08em"> </span><span style="color:#2a62e6"><span style="font-size:1.08em">1616(</span>成功<span style="font-size:1.08em">) 91(</span>失敗<span style="font-size:1.08em">)</span></span></div>
<div class="t" style="left:300.9px;top:160.6px;font-size:19px;color:#555;letter-spacing:-0.13px;">交易設定</div>
<div class="t" style="left:446.0px;top:162.1px;font-size:19px;color:#555;letter-spacing:-0.52px;"><span style="color:#f00;font-size:24px;font-weight:bold">作多</span><span style="font-size:1.08em">, </span>期貨保證金成數<span style="font-size:1.08em">13.5%, </span>交易費用<span style="font-size:1.08em"> : </span>股票<span style="font-size:1.08em">0.3%</span>、期貨<span style="font-size:1.08em">100</span>元<span style="font-size:1.08em">, </span>最大同時進場<span style="font-size:1.08em">1</span></div>
<div class="t" style="left:445.0px;top:194.4px;font-size:19px;color:#555;letter-spacing:-0.33px;">進場價格<span style="font-size:1.08em">:</span>當期收盤價<span style="font-size:1.08em">, </span>出場價格<span style="font-size:1.08em">:</span>下期開盤價</div>
<div class="t" style="left:411.0px;top:254.5px;font-size:19px;color:#555;letter-spacing:0.00px;">進場設定</div>
<div class="t" style="left:301.6px;top:308.3px;font-size:19px;color:#555;letter-spacing:-0.34px;"><span style="font-size:1.08em">35.</span>暴量剛起漲<span style="font-size:1.08em">( </span>日期區間<span style="font-size:1.08em">=60, </span>區間</div>
<div class="t" style="left:301.6px;top:335.1px;font-size:19px;color:#555;letter-spacing:-0.29px;">最大漲幅<span style="font-size:1.08em">%=14 )</span></div>
<div class="t" style="left:411.6px;top:381.0px;font-size:19px;color:#555;letter-spacing:-0.27px;">出場設定</div>
<div class="t" style="left:302.6px;top:437.6px;font-size:19px;color:#555;letter-spacing:-0.57px;">停利<span style="font-size:1.08em"> : </span>股票<span style="font-size:1.08em">7%</span>、期貨<span style="font-size:1.08em">50</span>點</div>
<div class="t" style="left:302.6px;top:462.0px;font-size:19px;color:#555;letter-spacing:-0.57px;">停損<span style="font-size:1.08em"> : </span>股票<span style="font-size:1.08em">7%</span>、期貨<span style="font-size:1.08em">50</span>點</div>
<div class="t" style="left:314.3px;top:609.3px;font-size:17px;color:#333;letter-spacing:1.20px;">30</div>
<div class="t" style="left:314.3px;top:658.1px;font-size:17px;color:#333;letter-spacing:1.20px;">20</div>
<div class="t" style="left:313.3px;top:714.0px;font-size:17px;color:#333;letter-spacing:2.20px;">10</div>
<div class="t" style="left:325.8px;top:770.2px;font-size:17px;color:#333;letter-spacing:0.00px;">0</div>
<div class="t" style="left:309.1px;top:826.2px;font-size:17px;color:#333;letter-spacing:0.40px;">-10</div>
<div class="t" style="left:309.1px;top:879.2px;font-size:17px;color:#333;letter-spacing:0.40px;">-20</div>
<div class="t" style="left:333.4px;top:898.8px;font-size:17px;color:#333;letter-spacing:0.33px;">2017/12/01</div>
<div class="t" style="left:496.6px;top:898.8px;font-size:17px;color:#333;letter-spacing:1.00px;">04</div>
<div class="t" style="left:614.9px;top:898.8px;font-size:17px;color:#333;letter-spacing:2.00px;">07</div>
<div class="t" style="left:740.8px;top:898.8px;font-size:17px;color:#333;letter-spacing:2.40px;">10</div>
<div class="t" style="left:862.0px;top:898.8px;font-size:17px;color:#333;letter-spacing:0.43px;">2019/01</div>
<div class="t" style="left:975.6px;top:898.8px;font-size:17px;color:#333;letter-spacing:0.20px;">04</div>
<div class="t" style="left:1095.8px;top:898.8px;font-size:17px;color:#333;letter-spacing:-0.40px;">07</div>
<div class="t" style="left:1219.0px;top:898.8px;font-size:17px;color:#333;letter-spacing:2.00px;">10</div>
<div class="t" style="left:1226.6px;top:645.7px;font-size:17px;color:#222;letter-spacing:0.38px;">23.65</div>
<div class="a" style="left:1173.5px;top:890.5px;width:92px;height:17px;background:#e8e8e8;border:1px solid #bdbdbd;border-radius:3px"></div>
<div class="t" style="left:1175.4px;top:892.7px;font-size:17px;color:#222;letter-spacing:0.10px;">2019/10/31</div>
<div class="t" style="left:346.0px;top:614.7px;font-size:17px;color:#888;letter-spacing:0.22px;">2019/10/31</div>
<div class="t" style="left:448.0px;top:614.7px;font-size:17px;color:#18a8a8;letter-spacing:0.00px;">總報酬率: 23.65 %</div>
<div class="t" style="left:601.1px;top:614.7px;font-size:17px;color:#9060b0;letter-spacing:0.17px;">加權指數(TSE.TW)報酬率: 7.15 %</div>
<div class="t" style="left:623.9px;top:253.6px;font-size:19px;color:#333;letter-spacing:-0.25px;-webkit-text-stroke:0.25px #333">總交易次數</div>
<div class="t" style="left:849.7px;top:253.1px;font-size:19px;color:#555;letter-spacing:1.00px;"><span style="font-size:1.08em">116</span></div>
<div class="t" style="left:942.9px;top:253.1px;font-size:19px;color:#333;letter-spacing:-0.90px;-webkit-text-stroke:0.25px #333">勝率<span style="font-size:1.08em">%</span></div>
<div class="t" style="left:1153.0px;top:253.1px;font-size:19px;color:#e8141e;letter-spacing:-0.64px;"><span style="font-size:1.08em">69.83%</span></div>
<div class="t" style="left:623.9px;top:311.4px;font-size:19px;color:#333;letter-spacing:-0.33px;-webkit-text-stroke:0.25px #333">獲利次數</div>
<div class="t" style="left:856.0px;top:310.9px;font-size:19px;color:#555;letter-spacing:-0.60px;"><span style="font-size:1.08em">81</span></div>
<div class="t" style="left:942.9px;top:311.4px;font-size:19px;color:#333;letter-spacing:-0.00px;-webkit-text-stroke:0.25px #333">虧損次數</div>
<div class="t" style="left:1175.2px;top:310.9px;font-size:19px;color:#555;letter-spacing:-0.80px;"><span style="font-size:1.08em">35</span></div>
<div class="t" style="left:623.9px;top:367.0px;font-size:19px;color:#333;letter-spacing:-0.85px;-webkit-text-stroke:0.25px #333">總報酬率<span style="font-size:1.08em">%</span></div>
<div class="t" style="left:834.9px;top:367.5px;font-size:19px;color:#e8141e;letter-spacing:-0.84px;"><span style="font-size:1.08em">23.65%</span></div>
<div class="t" style="left:943.9px;top:367.0px;font-size:19px;color:#333;letter-spacing:-0.68px;-webkit-text-stroke:0.25px #333">平均報酬率<span style="font-size:1.08em">%</span></div>
<div class="t" style="left:1158.7px;top:367.5px;font-size:19px;color:#555;letter-spacing:-0.95px;"><span style="font-size:1.08em">0.20%</span></div>
<div class="t" style="left:623.9px;top:423.8px;font-size:19px;color:#333;letter-spacing:-0.42px;-webkit-text-stroke:0.25px #333">最大獲利率<span style="font-size:1.08em">%(</span>單筆<span style="font-size:1.08em">)</span></div>
<div class="t" style="left:833.9px;top:424.3px;font-size:19px;color:#555;letter-spacing:-0.64px;"><span style="font-size:1.08em">12.14%</span></div>
<div class="t" style="left:943.9px;top:423.8px;font-size:19px;color:#333;letter-spacing:-0.42px;-webkit-text-stroke:0.25px #333">最大虧損率<span style="font-size:1.08em">%(</span>單筆<span style="font-size:1.08em">)</span></div>
<div class="t" style="left:1155.8px;top:424.3px;font-size:19px;color:#555;letter-spacing:-0.76px;"><span style="font-size:1.08em">-8.77%</span></div>
<div class="t" style="left:623.9px;top:481.5px;font-size:19px;color:#333;letter-spacing:-0.54px;-webkit-text-stroke:0.25px #333">最大連續獲利率<span style="font-size:1.08em">%</span></div>
<div class="t" style="left:839.6px;top:482.0px;font-size:19px;color:#555;letter-spacing:-0.85px;"><span style="font-size:1.08em">9.24%</span></div>
<div class="t" style="left:943.9px;top:481.5px;font-size:19px;color:#333;letter-spacing:-0.54px;-webkit-text-stroke:0.25px #333">最大連續虧損率<span style="font-size:1.08em">%</span></div>
<div class="t" style="left:1155.8px;top:482.0px;font-size:19px;color:#555;letter-spacing:-0.76px;"><span style="font-size:1.08em">-5.43%</span></div>
<div class="t" style="left:623.9px;top:538.1px;font-size:19px;color:#333;letter-spacing:-0.54px;-webkit-text-stroke:0.25px #333">最大區間獲利率<span style="font-size:1.08em">%</span></div>
<div class="t" style="left:834.9px;top:538.6px;font-size:19px;color:#555;letter-spacing:-0.84px;"><span style="font-size:1.08em">28.13%</span></div>
<div class="t" style="left:943.9px;top:538.1px;font-size:19px;color:#333;letter-spacing:-0.54px;-webkit-text-stroke:0.25px #333">最大區間虧損率<span style="font-size:1.08em">%</span></div>
<div class="t" style="left:1155.8px;top:538.6px;font-size:19px;color:#555;letter-spacing:-0.76px;"><span style="font-size:1.08em">-9.02%</span></div>
</body></html>
